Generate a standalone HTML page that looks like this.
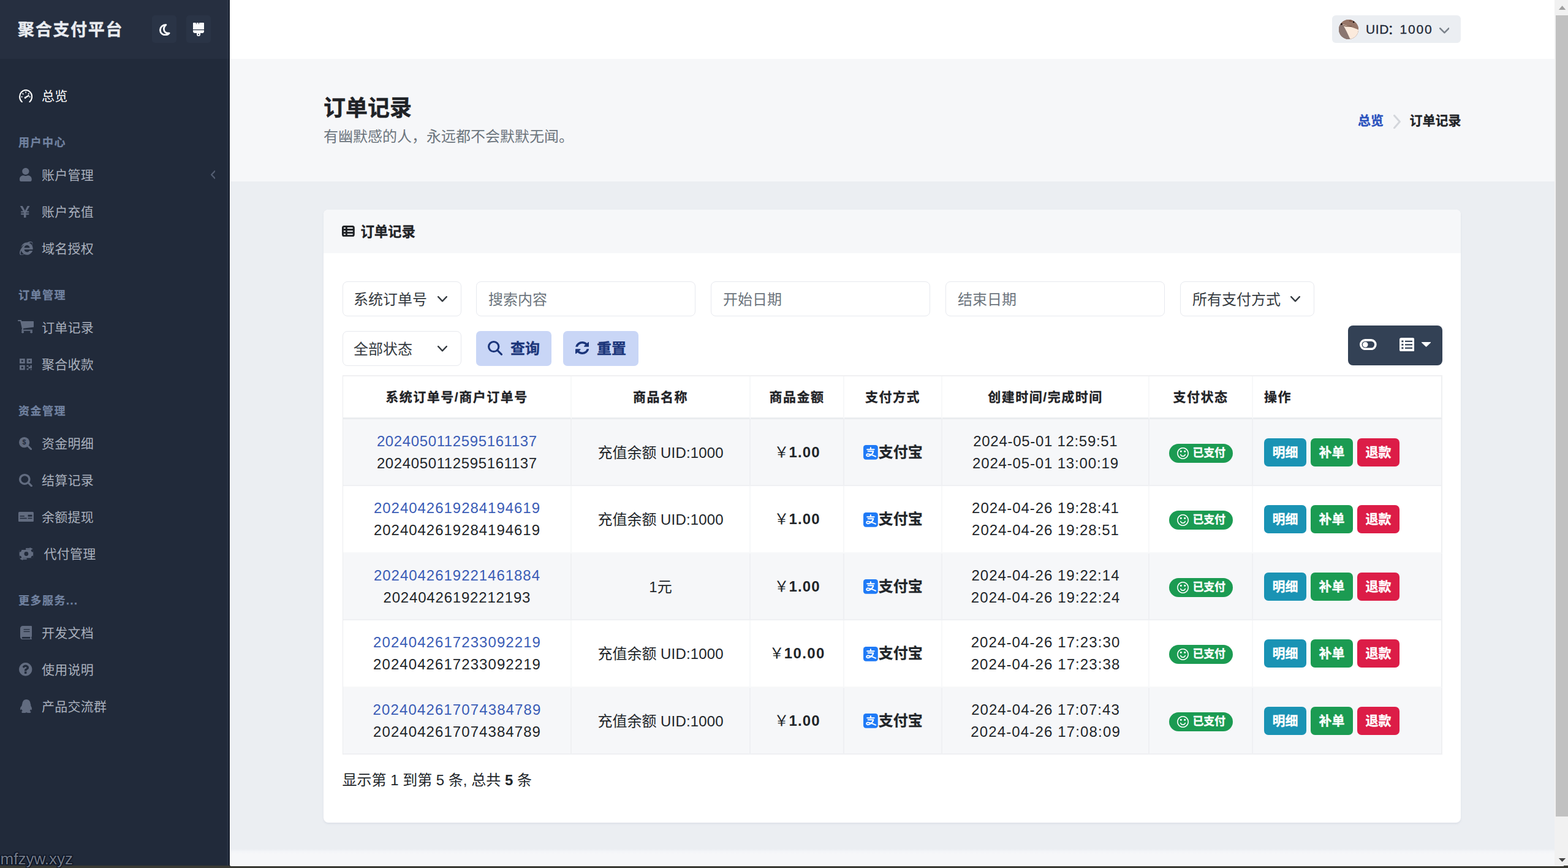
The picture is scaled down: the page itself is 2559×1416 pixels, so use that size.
<!DOCTYPE html>
<html lang="zh-CN">
<head>
<meta charset="utf-8">
<title>订单记录 - 聚合支付平台</title>
<style>
*{box-sizing:border-box;margin:0;padding:0}
html,body{width:2559px;height:1416px;overflow:hidden}
body{position:relative;background:#ebeef2;font-family:"Liberation Sans","Noto Sans CJK SC",sans-serif;font-size:24px;line-height:1.5;color:#212529}
a{text-decoration:none;color:inherit}
svg{display:block}
h1,h2,h3{font-weight:700}
/* sidebar */
#sidebar{position:absolute;left:0;top:0;width:375px;height:1412px;background:#212a3a;overflow:hidden}
#sidebar:after{content:"";position:absolute;right:0;top:0;width:5px;height:100%;background:linear-gradient(90deg,rgba(10,16,28,0) 0,rgba(60,72,92,.35) 30%,rgba(10,16,28,.1) 60%,rgba(6,12,24,.75) 100%)}
#sb-head{position:absolute;left:0;top:0;width:375px;height:96px;background:#262f40}
#brand{position:absolute;left:29px;top:3px;height:96px;line-height:93px;font-size:27px;font-weight:700;letter-spacing:1.7px;color:#e9ecf1;white-space:nowrap}
.hbtn{position:absolute;top:25px;width:40px;height:45px;border-radius:5px;background:#2a3446}
.hbtn svg{position:absolute}
.nav{position:absolute;left:0;top:126px;width:375px}
.nav .it{position:relative;height:60px;line-height:61px;font-size:21px;color:#a9b0bd;padding-left:68px;white-space:nowrap;letter-spacing:.25px}
.nav .it.on{color:#fff}
.nav .it svg{position:absolute;fill:#626c80}
.nav .hd{height:69px;padding:34.2px 0 0 30px;line-height:27px;font-size:18px;font-weight:700;letter-spacing:1.5px;color:#7182a0;white-space:nowrap}
#wm{position:absolute;left:.5px;top:1385.8px;z-index:9;font-size:26px;line-height:30px;color:#727a88;white-space:nowrap;text-shadow:0 0 2px #0a1120,1px 1px 1px #0a1120,-1px -1px 1px #0a1120,1px -1px 1px #0a1120,-1px 1px 1px #0a1120}
/* header */
#header{position:absolute;left:375px;top:0;width:2162px;height:96px;background:#fff}
#userbtn{position:absolute;left:2174px;top:25px;width:210px;height:45px;border-radius:6px;background:#ebeef2;color:#1f2937;font-size:21px;line-height:45px;white-space:nowrap}
#avatar{position:absolute;left:11px;top:7px;width:32px;height:32px;border-radius:50%;overflow:hidden;background:#8a6a5f}
#uid{position:absolute;left:55px;top:0}
#uid .u{letter-spacing:.6px}
#uid .c{margin-right:-1px;margin-left:-2.6px}
#uid .n{letter-spacing:1.85px}
/* hero */
#hero{position:absolute;left:375px;top:96px;width:2162px;height:200px;background:#f6f7f9}
#title{position:absolute;left:528px;top:150px;font-size:36px;line-height:54px;color:#1f2226;white-space:nowrap}
#sub{position:absolute;left:528px;top:205px;font-size:24px;line-height:36px;font-weight:400;color:#6c757d;white-space:nowrap}
#crumb{position:absolute;left:2216px;top:181px;font-size:21px;line-height:32px;font-weight:700;color:#1f2226;white-space:nowrap}
#crumb a{color:#2a52be}
#crumb span{position:absolute;left:84.500px;top:0}
#crumb svg{position:absolute;left:59px;top:6px}
/* block */
#block{position:absolute;left:528px;top:342px;width:1856px;height:1000px;background:#fff;border-radius:8px;box-shadow:0 2px 3px rgba(205,211,222,.55);overflow:hidden}
#bhead{position:absolute;left:0;top:0;width:100%;height:71px;background:#f6f7f9}
#btitle{position:absolute;left:60.500px;top:1px;line-height:71px;font-size:22.5px;color:#1f2226;white-space:nowrap;letter-spacing:-.2px}
.fc{position:absolute;height:57px;border:1px solid #e7e9ee;border-radius:8px;background:#fff;font-size:24px;line-height:58px;color:#343a40;padding-left:19px;white-space:nowrap}
.fc.ph{color:#6c757d}
.fc svg{position:absolute}
.btn{position:absolute;height:57px;border-radius:7px;background:#c9d6f6;color:#1b357a;font-size:24px;font-weight:700;line-height:58px;white-space:nowrap}
.btn svg{position:absolute}
.btn span{position:absolute;top:0}
#tools{position:absolute;left:2200px;top:531px;width:154px;height:65px;border-radius:8px;background:#334155}
#tools svg{position:absolute}
/* table */
#tbl{position:absolute;left:559px;top:612px;width:1795px;border-collapse:separate;border-spacing:0;table-layout:fixed;font-size:24px;color:#212529;border-left:1px solid #ebecef;border-top:2px solid #f0f0f2}
#tbl th,#tbl td{border-right:2px solid rgba(180,188,200,.1);border-bottom:2px solid rgba(180,188,200,.1);text-align:center;vertical-align:middle;padding:0;white-space:nowrap;overflow:hidden}
#tbl th{height:70px;font-size:21px;font-weight:700;color:#1f2226;letter-spacing:1.5px;border-bottom:3px solid #eaecef;background:#fff}
#tbl td{line-height:36px;background:#fff}
#tbl tbody tr:nth-child(odd) td{background:#f6f7f9}
#tbl tr.ra td{height:109px}
#tbl tr.rb td{height:110px}
#tbl a.no{color:#3a5cb6}
#tbl .l2{display:block;line-height:36px}
#tbl b{font-weight:700}
.badge{display:inline-block;position:relative;width:104px;height:31px;border-radius:16px;background:#1b9b52;color:#fff;font-size:18px;font-weight:700;line-height:31px;vertical-align:middle;text-align:left}
.badge svg{position:absolute;left:13px;top:6px}
.badge span{position:absolute;left:39px;top:0;letter-spacing:-.2px}
.ab{display:inline-block;width:69px;height:46px;border-radius:7px;color:#fff;font-size:21px;font-weight:700;line-height:46px;text-align:center;vertical-align:middle;margin-right:7px}
.ab.i{background:#1a93b4}.ab.s{background:#1b9b52}.ab.d{background:#dc1d47}
.pay{display:inline-block;position:relative;font-weight:700;color:#212529;padding-left:25.500px}
.pay svg{position:absolute;left:.8px;top:7px}
#pg{position:absolute;left:558.5px;top:1255px;font-size:24px;line-height:36px;color:#212529;white-space:nowrap}
/* footer / chrome */
#footer{position:absolute;left:375px;top:1385px;width:2162px;height:27px;background:linear-gradient(180deg,#ebeef2 0,#f3f5f8 4px,#f6f7f9 8px)}
#sbar{position:absolute;left:2537px;top:0;width:22px;height:1412px;background:#f1f1f1}
#thumb{position:absolute;left:2px;top:25px;width:20px;height:1307px;background:#c1c1c1}
#bot{position:absolute;left:0;top:1412px;width:2559px;height:4px;background:#3a3a34}
#botw{position:absolute;left:376px;top:1412px;width:2176px;height:1px;background:#fdfdfd}
.nav a.it{display:block}
#tbl .ops{text-align:left;padding-left:17px}
#tbl th.ops{padding-left:18px}
#tbl .nm{position:relative;top:1px}
#tbl td.ops{padding-left:18px}
#tbl th{padding-top:1px}
#title{-webkit-text-stroke:.45px #1f2226}
#brand{-webkit-text-stroke:.4px #e9ecf1}
#tbl th,#btitle,#crumb span{-webkit-text-stroke:.3px #1f2226}
#crumb a{-webkit-text-stroke:.3px #2a52be}
.btn span{-webkit-text-stroke:.3px #1b357a}
.ab,.badge span{-webkit-text-stroke:.3px #fff}
.pay{-webkit-text-stroke:.3px #212529}
.nav .hd{-webkit-text-stroke:.25px #7182a0}
#uid{-webkit-text-stroke:.3px #1f2937}
#edge{position:absolute;left:375px;top:0;width:1px;height:1412px;background:rgba(255,255,255,.85)}
#tbl th:last-child,#tbl td:last-child{border-right-color:#eff0f2}

</style>
</head>
<body>
<header id="header"></header>
<div id="hero"></div>
<footer id="footer"></footer>
<div id="edge"></div>
<nav id="sidebar">
<div id="sb-head">
<a id="brand">聚合支付平台</a>
<div class="hbtn" style="left:248px"><svg width="17.5" height="19.4" viewBox="0 0 100 108" preserveAspectRatio="none" style="position:absolute;left:12px;top:13.6px;" ><path d="M62 8 C 30 8 8 30 8 56 C 8 82 30 100 56 100 C 72 100 84 94 92 84 C 62 88 42 70 42 46 C 42 30 50 16 62 8 Z" fill="none" stroke="#fafbfc" stroke-width="16" stroke-linejoin="round"/></svg></div>
<div class="hbtn" style="left:304px"><svg width="18.1" height="24.4" viewBox="0 0 384 512" preserveAspectRatio="none" style="position:absolute;left:10.7px;top:9.8px;" ><path fill="#fafbfc" d="M24 40H96L112 105L128 40H186L202 105L218 40H360c13 0 24 11 24 24V272H0V64C0 51 11 40 24 40z"/><path fill="#fafbfc" fill-rule="evenodd" d="M0 300H384v36c0 35-29 64-64 64H256v48c0 35-29 64-64 64s-64-29-64-64V400H64c-35 0-64-29-64-64V300zM192 424a24 24 0 1 0 0 48 24 24 0 1 0 0-48z"/></svg></div>
</div>
<div class="nav">
<a class="it on"><svg width="22.2" height="21.5" viewBox="0.6 0.900 22.800 20.500" preserveAspectRatio="none" style="position:absolute;left:30.7px;top:19.5px;" ><g fill="none" stroke="#fff" stroke-linecap="round"><path d="M5.6 20.2A10.300 10.300 0 1 1 18.4 20.2" stroke-width="2.100"/><path d="M11.2 13.6L16.8 10.4" stroke-width="2.200"/><path d="M12 4.6v1.300M4.600 12.400h1.300M18.100 12.400h1.300M6.800 7.200l.9 .9M17.200 7.200l-.9 .9" stroke-width="1.500"/></g><circle cx="11.100" cy="13.700" r="1.500" fill="#fff"/></svg><span>总览</span></a>
<div class="hd">用户中心</div>
<a class="it"><svg width="19.7" height="21.9" viewBox="0 0 448 512" preserveAspectRatio="none" style="position:absolute;left:32.1px;top:19px;" ><path d="M224 256c70.7 0 128-57.3 128-128S294.7 0 224 0 96 57.3 96 128s57.3 128 128 128zm89.6 32h-16.7c-22.2 10.2-46.9 16-72.9 16s-50.6-5.800-72.900-16h-16.700C60.200 288 0 348.200 0 422.400V464c0 26.500 21.500 48 48 48h352c26.500 0 48-21.500 48-48v-41.600c0-74.200-60.200-134.400-134.400-134.400z"/></svg><span>账户管理</span><svg width="7.8" height="14" viewBox="0 0 7.8 14" style="position:absolute;left:343.6px;top:22.6px;"><path d="M6.7,1.1 L1.1,7 L6.7,12.9" fill="none" stroke="#535d71" stroke-width="2.2" stroke-linecap="round" stroke-linejoin="round"/></svg></a>
<a class="it"><svg width="15.3" height="19.1" viewBox="0 -1408 1026.76 1408" preserveAspectRatio="none" style="position:absolute;left:33.3px;top:21.3px;"><path transform="scale(1,-1)" d="M603 0h-172q-13 0 -22.5 9t-9.5 23v330h-288q-13 0 -22.5 9t-9.5 23v103q0 13 9.5 22.5t22.5 9.5h288v85h-288q-13 0 -22.5 9t-9.5 23v104q0 13 9.5 22.5t22.5 9.5h214l-321 578q-8 16 0 32q10 16 28 16h194q19 0 29 -18l215 -425q19 -38 56 -125q10 24 30.5 68t27.5 61 l191 420q8 19 29 19h191q17 0 27 -16q9 -14 1 -31l-313 -579h215q13 0 22.5 -9.5t9.5 -22.5v-104q0 -14 -9.5 -23t-22.5 -9h-290v-85h290q13 0 22.5 -9.5t9.5 -22.5v-103q0 -14 -9.5 -23t-22.5 -9h-290v-330q0 -13 -9.5 -22.5t-22.5 -9.5z"/></svg><span>账户充值</span></a>
<a class="it"><svg width="21.7" height="22.2" viewBox="0 -1520 1792 1760" preserveAspectRatio="none" style="position:absolute;left:32px;top:18.5px;"><path transform="scale(1,-1)" d="M1792 599q0 -56 -7 -104h-1151q0 -146 109.5 -244.5t257.5 -98.5q99 0 185.5 46.5t136.5 130.5h423q-56 -159 -170.5 -281t-267.5 -188.5t-321 -66.5q-187 0 -356 83q-228 -116 -394 -116q-237 0 -237 263q0 115 45 275q17 60 109 229q199 360 475 606 q-184 -79 -427 -354q63 274 283.5 449.5t501.5 175.5q30 0 45 -1q255 117 433 117q64 0 116 -13t94.5 -40.5t66.5 -76.5t24 -115q0 -116 -75 -286q101 -182 101 -390zM1722 1239q0 83 -53 132t-137 49q-108 0 -254 -70q121 -47 222.5 -131.5t170.5 -195.5q51 135 51 216z M128 2q0 -86 48.5 -132.5t134.5 -46.5q115 0 266 83q-122 72 -213.5 183t-137.5 245q-98 -205 -98 -332zM632 715h728q-5 142 -113 237t-251 95q-144 0 -251.5 -95t-112.5 -237z"/></svg><span>域名授权</span></a>
<div class="hd">订单管理</div>
<a class="it"><svg width="26.2" height="21.6" viewBox="0 -1280 1664 1408" preserveAspectRatio="none" style="position:absolute;left:28.5px;top:18.4px;"><path transform="scale(1,-1)" d="M640 0q0 -52 -38 -90t-90 -38t-90 38t-38 90t38 90t90 38t90 -38t38 -90zM1536 0q0 -52 -38 -90t-90 -38t-90 38t-38 90t38 90t90 38t90 -38t38 -90zM1664 1088v-512q0 -24 -16.5 -42.5t-40.5 -21.5l-1044 -122q13 -60 13 -70q0 -16 -24 -64h920q26 0 45 -19t19 -45 t-19 -45t-45 -19h-1024q-26 0 -45 19t-19 45q0 11 8 31.5t16 36t21.5 40t15.5 29.5l-177 823h-204q-26 0 -45 19t-19 45t19 45t45 19h256q16 0 28.5 -6.5t19.5 -15.5t13 -24.5t8 -26t5.5 -29.5t4.5 -26h1201q26 0 45 -19t19 -45z"/></svg><span>订单记录</span></a>
<a class="it"><svg width="20.3" height="18.6" viewBox="0 0 448 448" preserveAspectRatio="none" style="position:absolute;left:31.9px;top:21.1px;" ><path fill-rule="evenodd" d="M0 0h192v192h-192z M64 64v64h64v-64zM256 0h192v192h-192z M320 64v64h64v-64zM0 256h192v192h-192z M64 320v64h64v-64zM256 256h64v64h-64z M384 256h64v128h-128v-64h64z M256 384h64v64h-64z M384 416h64v32h-64z"/></svg><span>聚合收款</span></a>
<div class="hd">资金管理</div>
<a class="it"><svg width="21.2" height="21.2" viewBox="0 0 512 512" preserveAspectRatio="none" style="position:absolute;left:31px;top:19.8px;" ><circle cx="208" cy="208" r="208"/><path d="M330 330L474 474" fill="none" stroke="#626c80" stroke-width="72" stroke-linecap="round"/><text x="208" y="300" text-anchor="middle" font-family="Liberation Sans,sans-serif" font-weight="700" font-size="260" fill="#212a3a" style="fill:#212a3a">$</text></svg><span>资金明细</span></a>
<a class="it"><svg width="22" height="21.2" viewBox="0 -1408 1664 1664" preserveAspectRatio="none" style="position:absolute;left:31px;top:20px;"><path transform="scale(1,-1)" d="M1152 704q0 185 -131.5 316.5t-316.5 131.5t-316.5 -131.5t-131.5 -316.5t131.5 -316.5t316.5 -131.5t316.5 131.5t131.5 316.5zM1664 -128q0 -52 -38 -90t-90 -38q-54 0 -90 38l-343 342q-179 -124 -399 -124q-143 0 -273.5 55.5t-225 150t-150 225t-55.5 273.5 t55.5 273.5t150 225t225 150t273.5 55.5t273.5 -55.5t225 -150t150 -225t55.5 -273.5q0 -220 -124 -399l343 -343q37 -37 37 -90z"/></svg><span>结算记录</span></a>
<a class="it"><svg width="24.9" height="16.2" viewBox="0 0 640 416" preserveAspectRatio="none" style="position:absolute;left:29.8px;top:21.8px;" ><rect x="0" y="0" width="640" height="416" rx="40"/><g style="fill:#212a3a" fill="#212a3a"><rect x="64" y="250" width="290" height="40" rx="8"/><rect x="64" y="160" width="190" height="40" rx="8"/><rect x="400" y="120" width="176" height="80" rx="8"/><rect x="400" y="250" width="176" height="40" rx="8"/></g></svg><span>余额提现</span></a>
<a class="it" style="padding-left:71.500px"><svg width="25.8" height="21.1" viewBox="0 0 640 512" preserveAspectRatio="none" style="position:absolute;left:29.8px;top:19.5px;" ><rect x="40" y="96" width="560" height="320" rx="24"/><circle cx="320" cy="256" r="84" style="fill:#212a3a"/><path style="fill:#212a3a" d="M40 96h90a90 90 0 0 1-90 90zM600 96v90a90 90 0 0 1-90-90zM40 416v-90a90 90 0 0 1 90 90zM600 416h-90a90 90 0 0 1 90-90z"/><path d="M460 0l130 60-130 60v-32h-160v-56h160zM180 512l-130-60 130-60v32h160v56h-160z"/></svg><span>代付管理</span></a>
<div class="hd">更多服务...</div>
<a class="it"><svg width="19.1" height="22.2" viewBox="0 0 448 512" preserveAspectRatio="none" style="position:absolute;left:32.7px;top:19px;" ><path d="M96 0h320c18 0 32 14 32 32v352c0 12-7 23-18 28v68h2c9 0 16 7 16 16s-7 16-16 16H96c-53 0-96-43-96-96V96C0 43 43 0 96 0z"/><path style="fill:#212a3a" d="M96 416c-18 0-32 14-32 32s14 32 32 32h286v-64z"/><g style="fill:#212a3a"><rect x="128" y="120" width="240" height="30" rx="10"/><rect x="128" y="200" width="240" height="30" rx="10"/></g></svg><span>开发文档</span></a>
<a class="it"><svg width="21.4" height="21.7" viewBox="0 -1408 1536 1536" preserveAspectRatio="none" style="position:absolute;left:31.4px;top:19.3px;"><path transform="scale(1,-1)" d="M896 160v192q0 14 -9 23t-23 9h-192q-14 0 -23 -9t-9 -23v-192q0 -14 9 -23t23 -9h192q14 0 23 9t9 23zM1152 832q0 88 -55.5 163t-138.5 116t-170 41q-243 0 -371 -213q-15 -24 8 -42l132 -100q7 -6 19 -6q16 0 25 12q53 68 86 92q34 24 86 24q48 0 85.5 -26t37.5 -59 q0 -38 -20 -61t-68 -45q-63 -28 -115.5 -86.5t-52.5 -125.5v-36q0 -14 9 -23t23 -9h192q14 0 23 9t9 23q0 19 21.5 49.5t54.5 49.5q32 18 49 28.5t46 35t44.5 48t28 60.5t12.5 81zM1536 640q0 -209 -103 -385.5t-279.5 -279.5t-385.5 -103t-385.5 103t-279.5 279.5 t-103 385.5t103 385.5t279.5 279.5t385.5 103t385.5 -103t279.5 -279.5t103 -385.5z"/></svg><span>使用说明</span></a>
<a class="it"><svg width="19" height="22.3" viewBox="18 -1536 1756 1792" preserveAspectRatio="none" style="position:absolute;left:32.5px;top:19px;"><path transform="scale(1,-1)" d="M270 730q-8 19 -8 52q0 20 11 49t24 45q-1 22 7.5 53t22.5 43q0 139 92.5 288.5t217.5 209.5q139 66 324 66q133 0 266 -55q49 -21 90 -48t71 -56t55 -68t42 -74t32.5 -84.5t25.5 -89.5t22 -98l1 -5q55 -83 55 -150q0 -14 -9 -40t-9 -38q0 -1 1.5 -3.5t3.5 -5t2 -3.5 q77 -114 120.5 -214.5t43.5 -208.5q0 -43 -19.5 -100t-55.5 -57q-9 0 -19.5 7.5t-19 17.5t-19 26t-16 26.5t-13.5 26t-9 17.5q-1 1 -3 1l-5 -4q-59 -154 -132 -223q20 -20 61.5 -38.5t69 -41.5t35.5 -65q-2 -4 -4 -16t-7 -18q-64 -97 -302 -97q-53 0 -110.5 9t-98 20 t-104.5 30q-15 5 -23 7q-14 4 -46 4.5t-40 1.5q-41 -45 -127.5 -65t-168.5 -20q-35 0 -69 1.5t-93 9t-101 20.5t-74.5 40t-32.5 64q0 40 10 59.5t41 48.5q11 2 40.5 13t49.5 12q4 0 14 2q2 2 2 4l-2 3q-48 11 -108 105.5t-73 156.5l-5 3q-4 0 -12 -20q-18 -41 -54.5 -74.5 t-77.5 -37.5h-1q-4 0 -6 4.5t-5 5.5q-23 54 -23 100q0 275 252 466z"/></svg><span>产品交流群</span></a>
</div>
</nav>
<div id="wm">mfzyw.xyz</div>
<div id="userbtn"><div id="avatar"><svg width="32" height="32" viewBox="0 0 32 32"><rect width="32" height="32" fill="#977668"/><path d="M0 8L7 7L20 32H0z" fill="#8a7671"/><path d="M6.100 7.700C14 10 24 13 32 16.500V27L26.600 32H18.600C15 24 11 15 6.100 7.700z" fill="#fbeadc"/><path d="M7 9.500c4 1.500 9 1.800 14 1.200" fill="none" stroke="#6b4c3c" stroke-width="1.600" opacity=".8"/><ellipse cx="19.500" cy="2.200" rx="3" ry="1.200" fill="#7d5545"/><circle cx="24.100" cy="3.900" r="1.400" fill="#1d1210"/><circle cx="4.300" cy="7.200" r="1.500" fill="#1d1210"/></svg></div><span id="uid"><span class="u">UID</span><span class="c">：</span><span class="n">1000</span></span><svg width="16.8" height="9.6" viewBox="0 0 16.8 9.6" style="position:absolute;left:174.7px;top:20.2px;"><path d="M1.25,1.25 L8.4,8.35 L15.55,1.25" fill="none" stroke="#7b828b" stroke-width="2.5" stroke-linecap="round" stroke-linejoin="round"/></svg></div>
<h1 id="title">订单记录</h1>
<h2 id="sub">有幽默感的人，永远都不会默默无闻。</h2>
<div id="crumb"><a>总览</a><svg width="11.9" height="23.2" viewBox="0 0 11.9 23.2" style="position:absolute;left:58.3px;top:6.2px;"><path d="M1.5,1.5 L10.4,11.6 L1.5,21.7" fill="none" stroke="#d3d6db" stroke-width="3" stroke-linecap="round" stroke-linejoin="round"/></svg><span>订单记录</span></div>
<section id="block">
<div id="bhead"><svg width="20.8" height="18.3" viewBox="0 0 21 18" preserveAspectRatio="none" style="position:absolute;left:30px;top:26px;" ><g fill="none" stroke="#1f2226" stroke-width="3"><rect x="1.500" y="1.500" width="18" height="15" rx="2.200"/><path d="M7.400 1.500v15M1.500 6.500h18M1.500 11.500h18"/></g></svg><h3 id="btitle">订单记录</h3></div>
</section>
<div class="fc" style="left:558.5px;top:459px;width:194.5px;padding-left:17.4px">系统订单号<svg width="16" height="9.5" viewBox="0 0 16 9.5" style="position:absolute;left:154.7px;top:23px;"><path d="M1.15,1.15 L8,8.35 L14.85,1.15" fill="none" stroke="#343a40" stroke-width="2.3" stroke-linecap="round" stroke-linejoin="round"/></svg></div>
<div class="fc ph" style="left:777px;top:459px;width:358px">搜索内容</div>
<div class="fc ph" style="left:1160px;top:459px;width:358px">开始日期</div>
<div class="fc ph" style="left:1543px;top:459px;width:358px">结束日期</div>
<div class="fc" style="left:1926px;top:459px;width:219px;padding-left:19px">所有支付方式<svg width="16" height="9.5" viewBox="0 0 16 9.5" style="position:absolute;left:178.5px;top:23px;"><path d="M1.15,1.15 L8,8.35 L14.85,1.15" fill="none" stroke="#343a40" stroke-width="2.3" stroke-linecap="round" stroke-linejoin="round"/></svg></div>
<div class="fc" style="left:558.5px;top:540px;width:194.5px;padding-left:17.4px">全部状态<svg width="16" height="9.5" viewBox="0 0 16 9.5" style="position:absolute;left:154.7px;top:23px;"><path d="M1.15,1.15 L8,8.35 L14.85,1.15" fill="none" stroke="#343a40" stroke-width="2.3" stroke-linecap="round" stroke-linejoin="round"/></svg></div>
<a class="btn" style="left:777px;top:540px;width:123px"><svg width="24.1" height="23.7" viewBox="0 0 24 24" preserveAspectRatio="none" style="position:absolute;left:19.3px;top:16px;" ><g fill="none" stroke="#1b357a" stroke-width="3.100" stroke-linecap="round"><circle cx="9.700" cy="9.700" r="8.100"/><path d="M15.600 15.600L22.400 22.400"/></g></svg><span style="left:56px">查询</span></a>
<a class="btn" style="left:919px;top:540px;width:123px"><svg width="22.6" height="21" viewBox="0 -1408 1536 1536" preserveAspectRatio="none" style="position:absolute;left:19.9px;top:17.4px;" fill="#1b357a"><path transform="scale(1,-1)" d="M1511 480q0 -5 -1 -7q-64 -268 -268 -434.5t-478 -166.5q-146 0 -282.5 55t-243.5 157l-129 -129q-19 -19 -45 -19t-45 19t-19 45v448q0 26 19 45t45 19h448q26 0 45 -19t19 -45t-19 -45l-137 -137q71 -66 161 -102t187 -36q134 0 250 65t186 179q11 17 53 117 q8 23 30 23h192q13 0 22.5 -9.5t9.5 -22.5zM1536 1280v-448q0 -26 -19 -45t-45 -19h-448q-26 0 -45 19t-19 45t19 45l138 138q-148 137 -349 137q-134 0 -250 -65t-186 -179q-11 -17 -53 -117q-8 -23 -30 -23h-199q-13 0 -22.5 9.5t-9.5 22.5v7q65 268 270 434.5t480 166.5 q146 0 284 -55.5t245 -156.5l130 129q19 19 45 19t45 -19t19 -45z"/></svg><span style="left:55px">重置</span></a>
<div id="tools"><svg width="27.7" height="18.2" viewBox="0 0 28 18" preserveAspectRatio="none" style="position:absolute;left:19.1px;top:22.1px;" ><rect x="1.800" y="1.800" width="24.400" height="14.400" rx="7.200" fill="none" stroke="#fff" stroke-width="3.600"/><circle cx="9.300" cy="9" r="4.400" fill="#fff"/></svg><svg width="24.4" height="22.6" viewBox="0 0 24.4 22.6" preserveAspectRatio="none" style="position:absolute;left:83.8px;top:19.6px;" ><rect x="0" y="0" width="24.400" height="22.600" rx="3.200" fill="#fff"/><g fill="#334155"><rect x="3.400" y="4.400" width="3" height="2.800"/><rect x="3.400" y="9.900" width="3" height="2.800"/><rect x="3.400" y="15.400" width="3" height="2.800"/><rect x="9" y="4.700" width="12" height="2.200"/><rect x="9" y="10.200" width="12" height="2.200"/><rect x="9" y="15.700" width="12" height="2.200"/></g></svg><svg width="15.2" height="7.8" viewBox="0 0 15 8" preserveAspectRatio="none" style="position:absolute;left:120.3px;top:27px;" ><path d="M0.500 0h14c.5 0 .7 .5 .4 .9l-6.800 6.800c-.3 .3-.900 .3-1.200 0L.1 .9C-.2 .5 0 0 .5 0z" fill="#fff"/></svg></div>
<table id="tbl">
<colgroup><col style="width:373px"><col style="width:292px"><col style="width:153px"><col style="width:160px"><col style="width:338px"><col style="width:169px"><col style="width:309px"></colgroup>
<thead><tr><th>系统订单号/商户订单号</th><th>商品名称</th><th>商品金额</th><th>支付方式</th><th>创建时间/完成时间</th><th>支付状态</th><th class="ops">操作</th></tr></thead>
<tbody>
<tr class="ra"><td><a class="no l2"><span style="letter-spacing:0.62px;margin-right:-0.62px">2024050112595161137</span></a><span class="l2"><span style="letter-spacing:0.62px;margin-right:-0.62px">2024050112595161137</span></span></td><td><span class="nm">充值余额 <span style="letter-spacing:0.15px;margin-right:-0.15px">UID:1000</span></span></td><td><span class="amt">￥<b><span style="letter-spacing:1.1px;margin-right:-1.1px">1.00</span></b></span></td><td><span class="pay"><svg width="23.8" height="23.8" viewBox="0 0 24 24" preserveAspectRatio="none" style="position:absolute;left:0.8px;top:6.8px;" ><rect width="24" height="24" rx="4.200" fill="#1f7af6"/><g fill="none" stroke="#fff" stroke-width="2" stroke-linecap="round" stroke-linejoin="round"><path d="M6.200 7.300h11.600M12 4.300v3"/><path d="M7.800 10.300h8.700c-.6 2.600-2.200 4.900-4.500 6.400-2 1.300-4.400 2.200-6 1.200-1.300-.9-.9-2.900 1-3.300 2.500-.5 6.800 1.700 13.300 4.300"/></g></svg>支付宝</span></td><td><span class="l2"><span style="letter-spacing:0.7px;margin-right:-0.7px">2024-05-01 12:59:51</span></span><span class="l2"><span style="letter-spacing:0.84px;margin-right:-0.84px">2024-05-01 13:00:19</span></span></td><td><span class="badge"><svg width="19" height="19" viewBox="0 -1408 1536 1536" preserveAspectRatio="none" style="position:absolute;left:13px;top:6px;" fill="#fff"><path transform="scale(1,-1)" d="M1134 461q-37 -121 -138 -195t-228 -74t-228 74t-138 195q-8 25 4 48.5t38 31.5q25 8 48.5 -4t31.5 -38q25 -80 92.5 -129.5t151.5 -49.5t151.5 49.5t92.5 129.5q8 26 32 38t49 4t37 -31.5t4 -48.5zM640 896q0 -53 -37.5 -90.5t-90.5 -37.5t-90.5 37.5t-37.5 90.5 t37.5 90.5t90.5 37.5t90.5 -37.5t37.5 -90.5zM1152 896q0 -53 -37.5 -90.5t-90.5 -37.5t-90.5 37.5t-37.5 90.5t37.5 90.5t90.5 37.5t90.5 -37.5t37.5 -90.5zM1408 640q0 130 -51 248.5t-136.5 204t-204 136.5t-248.5 51t-248.5 -51t-204 -136.5t-136.5 -204t-51 -248.5 t51 -248.5t136.5 -204t204 -136.5t248.5 -51t248.5 51t204 136.5t136.5 204t51 248.5zM1536 640q0 -209 -103 -385.5t-279.5 -279.5t-385.5 -103t-385.5 103t-279.5 279.5t-103 385.5t103 385.5t279.5 279.5t385.5 103t385.5 -103t279.5 -279.5t103 -385.5z"/></svg><span>已支付</span></span></td><td class="ops"><a class="ab i">明细</a><a class="ab s">补单</a><a class="ab d">退款</a></td></tr>
<tr class="rb"><td><a class="no l2"><span style="letter-spacing:0.97px;margin-right:-0.97px">2024042619284194619</span></a><span class="l2"><span style="letter-spacing:0.97px;margin-right:-0.97px">2024042619284194619</span></span></td><td><span class="nm">充值余额 <span style="letter-spacing:0.15px;margin-right:-0.15px">UID:1000</span></span></td><td><span class="amt">￥<b><span style="letter-spacing:1.1px;margin-right:-1.1px">1.00</span></b></span></td><td><span class="pay"><svg width="23.8" height="23.8" viewBox="0 0 24 24" preserveAspectRatio="none" style="position:absolute;left:0.8px;top:6.8px;" ><rect width="24" height="24" rx="4.200" fill="#1f7af6"/><g fill="none" stroke="#fff" stroke-width="2" stroke-linecap="round" stroke-linejoin="round"><path d="M6.200 7.300h11.600M12 4.300v3"/><path d="M7.800 10.300h8.700c-.6 2.600-2.200 4.900-4.500 6.400-2 1.300-4.400 2.200-6 1.200-1.300-.9-.9-2.900 1-3.300 2.500-.5 6.800 1.700 13.300 4.300"/></g></svg>支付宝</span></td><td><span class="l2"><span style="letter-spacing:0.94px;margin-right:-0.94px">2024-04-26 19:28:41</span></span><span class="l2"><span style="letter-spacing:0.94px;margin-right:-0.94px">2024-04-26 19:28:51</span></span></td><td><span class="badge"><svg width="19" height="19" viewBox="0 -1408 1536 1536" preserveAspectRatio="none" style="position:absolute;left:13px;top:6px;" fill="#fff"><path transform="scale(1,-1)" d="M1134 461q-37 -121 -138 -195t-228 -74t-228 74t-138 195q-8 25 4 48.5t38 31.5q25 8 48.5 -4t31.5 -38q25 -80 92.5 -129.5t151.5 -49.5t151.5 49.5t92.5 129.5q8 26 32 38t49 4t37 -31.5t4 -48.5zM640 896q0 -53 -37.5 -90.5t-90.5 -37.5t-90.5 37.5t-37.5 90.5 t37.5 90.5t90.5 37.5t90.5 -37.5t37.5 -90.5zM1152 896q0 -53 -37.5 -90.5t-90.5 -37.5t-90.5 37.5t-37.5 90.5t37.5 90.5t90.5 37.5t90.5 -37.5t37.5 -90.5zM1408 640q0 130 -51 248.5t-136.5 204t-204 136.5t-248.5 51t-248.5 -51t-204 -136.5t-136.5 -204t-51 -248.5 t51 -248.5t136.5 -204t204 -136.5t248.5 -51t248.5 51t204 136.5t136.5 204t51 248.5zM1536 640q0 -209 -103 -385.5t-279.5 -279.5t-385.5 -103t-385.5 103t-279.5 279.5t-103 385.5t103 385.5t279.5 279.5t385.5 103t385.5 -103t279.5 -279.5t103 -385.5z"/></svg><span>已支付</span></span></td><td class="ops"><a class="ab i">明细</a><a class="ab s">补单</a><a class="ab d">退款</a></td></tr>
<tr class="ra"><td><a class="no l2"><span style="letter-spacing:0.97px;margin-right:-0.97px">2024042619221461884</span></a><span class="l2"><span style="letter-spacing:0.81px;margin-right:-0.81px">20240426192212193</span></span></td><td><span class="nm"><span style="letter-spacing:0px;margin-right:0px">1</span>元</span></td><td><span class="amt">￥<b><span style="letter-spacing:1.1px;margin-right:-1.1px">1.00</span></b></span></td><td><span class="pay"><svg width="23.8" height="23.8" viewBox="0 0 24 24" preserveAspectRatio="none" style="position:absolute;left:0.8px;top:6.8px;" ><rect width="24" height="24" rx="4.200" fill="#1f7af6"/><g fill="none" stroke="#fff" stroke-width="2" stroke-linecap="round" stroke-linejoin="round"><path d="M6.200 7.300h11.600M12 4.300v3"/><path d="M7.800 10.300h8.700c-.6 2.600-2.200 4.900-4.500 6.400-2 1.300-4.400 2.200-6 1.200-1.300-.9-.9-2.900 1-3.300 2.500-.5 6.800 1.700 13.300 4.300"/></g></svg>支付宝</span></td><td><span class="l2"><span style="letter-spacing:1.01px;margin-right:-1.01px">2024-04-26 19:22:14</span></span><span class="l2"><span style="letter-spacing:1.09px;margin-right:-1.09px">2024-04-26 19:22:24</span></span></td><td><span class="badge"><svg width="19" height="19" viewBox="0 -1408 1536 1536" preserveAspectRatio="none" style="position:absolute;left:13px;top:6px;" fill="#fff"><path transform="scale(1,-1)" d="M1134 461q-37 -121 -138 -195t-228 -74t-228 74t-138 195q-8 25 4 48.5t38 31.5q25 8 48.5 -4t31.5 -38q25 -80 92.5 -129.5t151.5 -49.5t151.5 49.5t92.5 129.5q8 26 32 38t49 4t37 -31.5t4 -48.5zM640 896q0 -53 -37.5 -90.5t-90.5 -37.5t-90.5 37.5t-37.5 90.5 t37.5 90.5t90.5 37.5t90.5 -37.5t37.5 -90.5zM1152 896q0 -53 -37.5 -90.5t-90.5 -37.5t-90.5 37.5t-37.5 90.5t37.5 90.5t90.5 37.5t90.5 -37.5t37.5 -90.5zM1408 640q0 130 -51 248.5t-136.5 204t-204 136.5t-248.5 51t-248.5 -51t-204 -136.5t-136.5 -204t-51 -248.5 t51 -248.5t136.5 -204t204 -136.5t248.5 -51t248.5 51t204 136.5t136.5 204t51 248.5zM1536 640q0 -209 -103 -385.5t-279.5 -279.5t-385.5 -103t-385.5 103t-279.5 279.5t-103 385.5t103 385.5t279.5 279.5t385.5 103t385.5 -103t279.5 -279.5t103 -385.5z"/></svg><span>已支付</span></span></td><td class="ops"><a class="ab i">明细</a><a class="ab s">补单</a><a class="ab d">退款</a></td></tr>
<tr class="rb"><td><a class="no l2"><span style="letter-spacing:1.07px;margin-right:-1.07px">2024042617233092219</span></a><span class="l2"><span style="letter-spacing:1.07px;margin-right:-1.07px">2024042617233092219</span></span></td><td><span class="nm">充值余额 <span style="letter-spacing:0.15px;margin-right:-0.15px">UID:1000</span></span></td><td><span class="amt">￥<b><span style="letter-spacing:1.35px;margin-right:-1.35px">10.00</span></b></span></td><td><span class="pay"><svg width="23.8" height="23.8" viewBox="0 0 24 24" preserveAspectRatio="none" style="position:absolute;left:0.8px;top:6.8px;" ><rect width="24" height="24" rx="4.200" fill="#1f7af6"/><g fill="none" stroke="#fff" stroke-width="2" stroke-linecap="round" stroke-linejoin="round"><path d="M6.200 7.300h11.600M12 4.300v3"/><path d="M7.800 10.300h8.700c-.6 2.600-2.200 4.900-4.500 6.400-2 1.300-4.400 2.200-6 1.200-1.300-.9-.9-2.900 1-3.300 2.500-.5 6.800 1.700 13.300 4.300"/></g></svg>支付宝</span></td><td><span class="l2"><span style="letter-spacing:1.1px;margin-right:-1.1px">2024-04-26 17:23:30</span></span><span class="l2"><span style="letter-spacing:1.1px;margin-right:-1.1px">2024-04-26 17:23:38</span></span></td><td><span class="badge"><svg width="19" height="19" viewBox="0 -1408 1536 1536" preserveAspectRatio="none" style="position:absolute;left:13px;top:6px;" fill="#fff"><path transform="scale(1,-1)" d="M1134 461q-37 -121 -138 -195t-228 -74t-228 74t-138 195q-8 25 4 48.5t38 31.5q25 8 48.5 -4t31.5 -38q25 -80 92.5 -129.5t151.5 -49.5t151.5 49.5t92.5 129.5q8 26 32 38t49 4t37 -31.5t4 -48.5zM640 896q0 -53 -37.5 -90.5t-90.5 -37.5t-90.5 37.5t-37.5 90.5 t37.5 90.5t90.5 37.5t90.5 -37.5t37.5 -90.5zM1152 896q0 -53 -37.5 -90.5t-90.5 -37.5t-90.5 37.5t-37.5 90.5t37.5 90.5t90.5 37.5t90.5 -37.5t37.5 -90.5zM1408 640q0 130 -51 248.5t-136.5 204t-204 136.5t-248.5 51t-248.5 -51t-204 -136.5t-136.5 -204t-51 -248.5 t51 -248.5t136.5 -204t204 -136.5t248.5 -51t248.5 51t204 136.5t136.5 204t51 248.5zM1536 640q0 -209 -103 -385.5t-279.5 -279.5t-385.5 -103t-385.5 103t-279.5 279.5t-103 385.5t103 385.5t279.5 279.5t385.5 103t385.5 -103t279.5 -279.5t103 -385.5z"/></svg><span>已支付</span></span></td><td class="ops"><a class="ab i">明细</a><a class="ab s">补单</a><a class="ab d">退款</a></td></tr>
<tr class="ra"><td><a class="no l2"><span style="letter-spacing:1.12px;margin-right:-1.12px">2024042617074384789</span></a><span class="l2"><span style="letter-spacing:1.07px;margin-right:-1.07px">2024042617074384789</span></span></td><td><span class="nm">充值余额 <span style="letter-spacing:0.15px;margin-right:-0.15px">UID:1000</span></span></td><td><span class="amt">￥<b><span style="letter-spacing:1.1px;margin-right:-1.1px">1.00</span></b></span></td><td><span class="pay"><svg width="23.8" height="23.8" viewBox="0 0 24 24" preserveAspectRatio="none" style="position:absolute;left:0.8px;top:6.8px;" ><rect width="24" height="24" rx="4.200" fill="#1f7af6"/><g fill="none" stroke="#fff" stroke-width="2" stroke-linecap="round" stroke-linejoin="round"><path d="M6.200 7.300h11.600M12 4.300v3"/><path d="M7.800 10.300h8.700c-.6 2.600-2.200 4.900-4.500 6.400-2 1.300-4.400 2.200-6 1.200-1.300-.9-.9-2.900 1-3.300 2.500-.5 6.800 1.700 13.300 4.300"/></g></svg>支付宝</span></td><td><span class="l2"><span style="letter-spacing:1.04px;margin-right:-1.04px">2024-04-26 17:07:43</span></span><span class="l2"><span style="letter-spacing:1.15px;margin-right:-1.15px">2024-04-26 17:08:09</span></span></td><td><span class="badge"><svg width="19" height="19" viewBox="0 -1408 1536 1536" preserveAspectRatio="none" style="position:absolute;left:13px;top:6px;" fill="#fff"><path transform="scale(1,-1)" d="M1134 461q-37 -121 -138 -195t-228 -74t-228 74t-138 195q-8 25 4 48.5t38 31.5q25 8 48.5 -4t31.5 -38q25 -80 92.5 -129.5t151.5 -49.5t151.5 49.5t92.5 129.5q8 26 32 38t49 4t37 -31.5t4 -48.5zM640 896q0 -53 -37.5 -90.5t-90.5 -37.5t-90.5 37.5t-37.5 90.5 t37.5 90.5t90.5 37.5t90.5 -37.5t37.5 -90.5zM1152 896q0 -53 -37.5 -90.5t-90.5 -37.5t-90.5 37.5t-37.5 90.5t37.5 90.5t90.5 37.5t90.5 -37.5t37.5 -90.5zM1408 640q0 130 -51 248.5t-136.5 204t-204 136.5t-248.5 51t-248.5 -51t-204 -136.5t-136.5 -204t-51 -248.5 t51 -248.5t136.5 -204t204 -136.5t248.5 -51t248.5 51t204 136.5t136.5 204t51 248.5zM1536 640q0 -209 -103 -385.5t-279.5 -279.5t-385.5 -103t-385.5 103t-279.5 279.5t-103 385.5t103 385.5t279.5 279.5t385.5 103t385.5 -103t279.5 -279.5t103 -385.5z"/></svg><span>已支付</span></span></td><td class="ops"><a class="ab i">明细</a><a class="ab s">补单</a><a class="ab d">退款</a></td></tr>
</tbody>
</table>
<div id="pg">显示第 1 到第 5 条, 总共 <b>5</b> 条</div>
<div id="sbar"><div id="thumb"></div>
<svg width="23" height="25" viewBox="0 0 23 25" style="position:absolute;left:-1px;top:0"><path d="M7.9 16.1L13.6 9.3L19.3 16.1Z" fill="#a0a0a0"/></svg>
<svg width="23" height="25" viewBox="0 0 23 25" style="position:absolute;left:-1px;top:1387px"><path d="M7.9 12.9L19.2 12.9L13.55 19Z" fill="#454545"/></svg>
</div>
<div id="bot"></div><div id="botw"></div>
</body>
</html>
